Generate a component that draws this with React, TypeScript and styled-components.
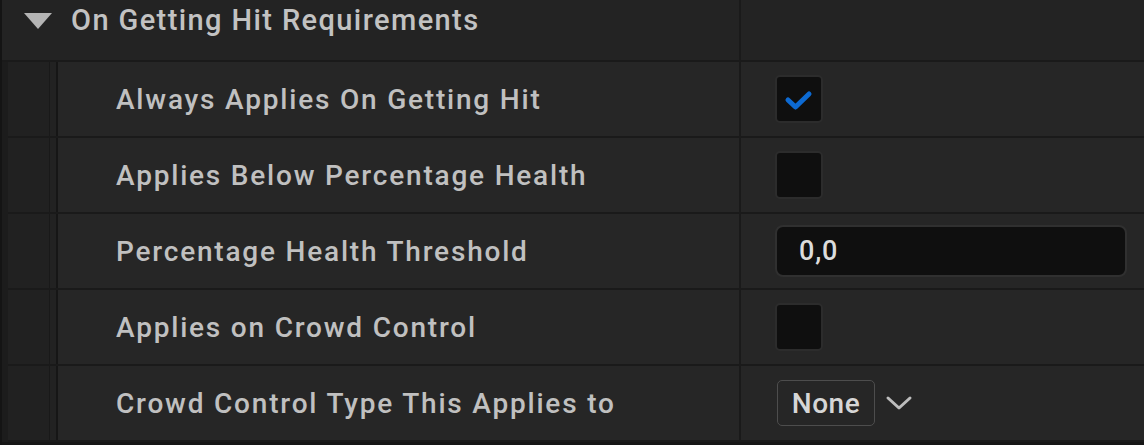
import styled, { createGlobalStyle } from 'styled-components';

const GlobalStyle = createGlobalStyle`
  html, body {
    margin: 0;
    padding: 0;
    background: #161616;
  }
  body {
    font-family: Roboto, "Noto Sans", "Liberation Sans", sans-serif;
  }
`;

const Panel = styled.div`
  width: 1144px;
  display: flex;
  flex-direction: column;
  background: #1c1c1c;
  border-left: 2px solid #141414;
  box-sizing: border-box;
`;

const HeaderRow = styled.div`
  display: grid;
  grid-template-columns: 739px 1fr;
  height: 60px;
  background: #232323;
  border-bottom: 2px solid #1a1a1a;
`;

const HeaderName = styled.div`
  display: flex;
  align-items: center;
  gap: 18px;
  padding-left: 21px;
  padding-bottom: 20px;
  box-sizing: border-box;
  height: 60px;
  border-right: 2px solid #1a1a1a;
  color: #c2c2c2;
  font-size: 29px;
  font-weight: 500;
  letter-spacing: 1.4px;
`;

const Row = styled.div`
  display: grid;
  grid-template-columns: 42px 8px 683px 1fr;
  height: 74px;
  margin-left: 6px;
  border-bottom: 2px solid #1a1a1a;
  background: #262626;
`;

const Indent = styled.div`
  background: #212121;
  border-right: 1px solid #191919;
`;

const IndentEdge = styled.div`
  background: #222222;
  border-right: 2px solid #161616;
`;

const Label = styled.div`
  display: flex;
  align-items: center;
  padding-left: 58px;
  border-right: 2px solid #1a1a1a;
  color: #c0c0c0;
  font-size: 28px;
  font-weight: 500;
  letter-spacing: 1.8px;
`;

const Value = styled.div`
  display: flex;
  align-items: center;
  padding-left: 34px;
  padding-right: 17px;
`;

const Checkbox = styled.div`
  width: 44px;
  height: 44px;
  border-radius: 5px;
  background: #0f0f0f;
  border: 2px solid #2c2c2c;
  display: flex;
  align-items: center;
  justify-content: center;
`;

const NumberField = styled.div`
  flex: 1;
  height: 48px;
  border-radius: 8px;
  background: #0f0f0f;
  border: 2px solid #303030;
  display: flex;
  align-items: center;
  padding-left: 22px;
  color: #dcdcdc;
  font-size: 27px;
  font-weight: 500;
  letter-spacing: 0.8px;
`;

const Combo = styled.div`
  display: flex;
  align-items: center;
  gap: 10px;
  margin-left: 2px;
`;

const ComboBox = styled.div`
  height: 46px;
  width: 98px;
  box-sizing: border-box;
  border-radius: 5px;
  border: 1.5px solid #4d4d4d;
  display: flex;
  align-items: center;
  justify-content: center;
  color: #d6d6d6;
  font-size: 28px;
  font-weight: 500;
  letter-spacing: 0.5px;
`;

const BottomGap = styled.div`
  height: 3px;
  background: #161616;
`;

type Field =
  | { kind: 'check'; on: boolean }
  | { kind: 'number'; value: string }
  | { kind: 'combo'; value: string };

const rows: { label: string; field: Field }[] = [
  { label: 'Always Applies On Getting Hit', field: { kind: 'check', on: true } },
  { label: 'Applies Below Percentage Health', field: { kind: 'check', on: false } },
  { label: 'Percentage Health Threshold', field: { kind: 'number', value: '0,0' } },
  { label: 'Applies on Crowd Control', field: { kind: 'check', on: false } },
  { label: 'Crowd Control Type This Applies to', field: { kind: 'combo', value: 'None' } },
];

function renderField(field: Field) {
  if (field.kind === 'check') {
    return (
      <Checkbox>
        {field.on && (
          <svg width="34" height="34" viewBox="0 0 34 34">
            <path
              d="M6 18 L13.5 25 L27 12"
              fill="none"
              stroke="#0d6ad2"
              strokeWidth="5"
              strokeLinecap="round"
              strokeLinejoin="round"
            />
          </svg>
        )}
      </Checkbox>
    );
  }
  if (field.kind === 'number') {
    return <NumberField>{field.value}</NumberField>;
  }
  return (
    <Combo>
      <ComboBox>{field.value}</ComboBox>
      <svg width="28" height="18" viewBox="0 0 28 18">
        <path
          d="M3 4 L14 14 L25 4"
          fill="none"
          stroke="#bdbdbd"
          strokeWidth="3"
          strokeLinecap="round"
          strokeLinejoin="round"
        />
      </svg>
    </Combo>
  );
}

export default function App() {
  return (
    <>
      <GlobalStyle />
      <Panel>
        <HeaderRow>
          <HeaderName>
            <svg width="30" height="20" viewBox="0 0 30 20" style={{ marginTop: 2 }}>
              <path d="M1 2 L29 2 L15 18 Z" fill="#b4b4b4" />
            </svg>
            On Getting Hit Requirements
          </HeaderName>
          <div />
        </HeaderRow>
        {rows.map((r) => (
          <Row key={r.label}>
            <Indent />
            <IndentEdge />
            <Label>{r.label}</Label>
            <Value>{renderField(r.field)}</Value>
          </Row>
        ))}
        <BottomGap />
      </Panel>
    </>
  );
}
